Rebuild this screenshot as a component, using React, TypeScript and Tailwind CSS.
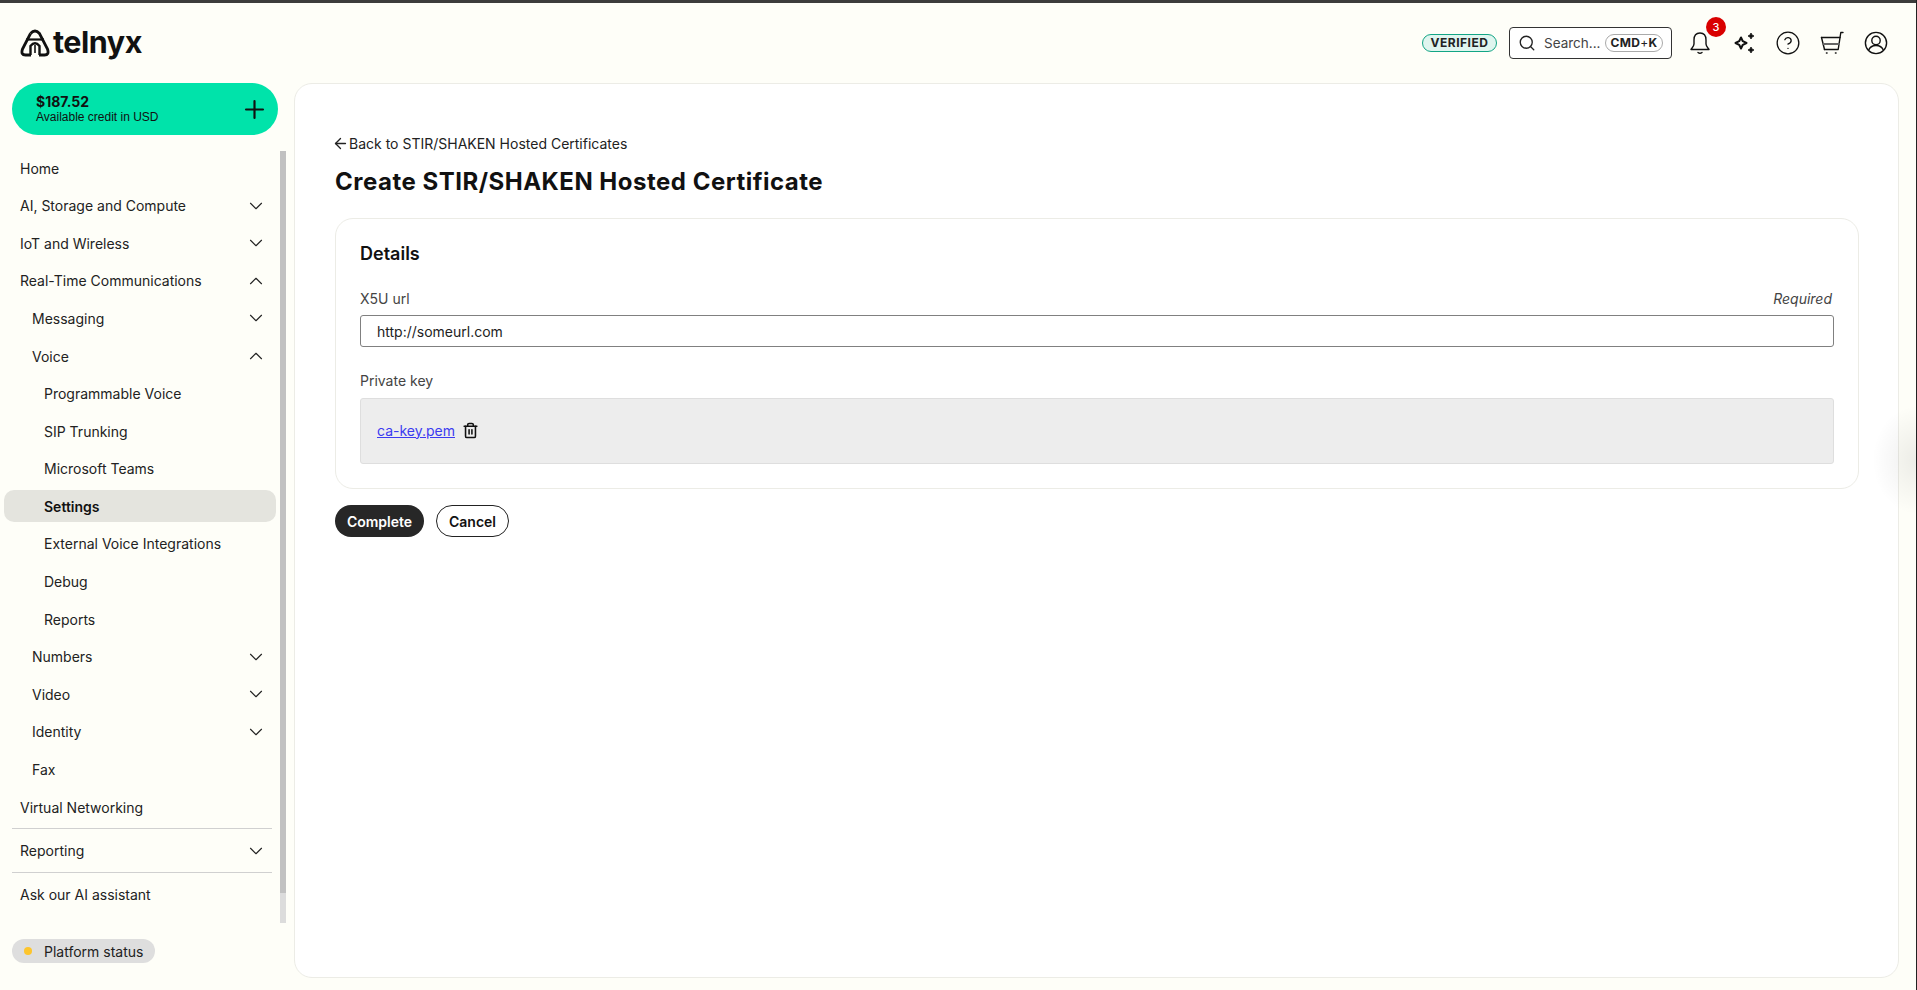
import { ArrowLeft, ChevronDown, ChevronUp, CircleHelp, Plus, Search, Trash2 } from 'lucide-react'

type NavRow = {
  label: string
  indent?: 0 | 1 | 2
  arrow?: 'up' | 'down'
  active?: boolean
}

const navRows: NavRow[] = [
  { label: 'Home' },
  { label: 'AI, Storage and Compute', arrow: 'down' },
  { label: 'IoT and Wireless', arrow: 'down' },
  { label: 'Real-Time Communications', arrow: 'up' },
  { label: 'Messaging', indent: 1, arrow: 'down' },
  { label: 'Voice', indent: 1, arrow: 'up' },
  { label: 'Programmable Voice', indent: 2 },
  { label: 'SIP Trunking', indent: 2 },
  { label: 'Microsoft Teams', indent: 2 },
  { label: 'Settings', indent: 2, active: true },
  { label: 'External Voice Integrations', indent: 2 },
  { label: 'Debug', indent: 2 },
  { label: 'Reports', indent: 2 },
  { label: 'Numbers', indent: 1, arrow: 'down' },
  { label: 'Video', indent: 1, arrow: 'down' },
  { label: 'Identity', indent: 1, arrow: 'down' },
  { label: 'Fax', indent: 1 },
  { label: 'Virtual Networking' },
]

function Row({ label, indent = 0, arrow, active }: NavRow) {
  const pad = indent === 2 ? 'pl-[40px]' : indent === 1 ? 'pl-[28px]' : 'pl-[16px]'
  return (
    <div className="flex h-[37.6px] items-center">
      <div
        className={`flex h-[32px] w-full items-center justify-between pr-[9px] ${pad} ${
          active ? 'rounded-[10px] bg-[#e4e4de] font-semibold text-[#111111]' : 'text-[#222222]'
        }`}
      >
        <span>{label}</span>
        {arrow === 'down' && <ChevronDown size={22} strokeWidth={1.2} />}
        {arrow === 'up' && <ChevronUp size={22} strokeWidth={1.2} />}
      </div>
    </div>
  )
}

function LogoMark() {
  return (
    <svg width="30" height="28" viewBox="0 0 30 28" fill="none" stroke="#111111" strokeWidth="2.8">
      <path d="M10.5 4.5 Q15 -0.5 19.5 4.5 L27.5 20 Q29.5 26 24.5 26 H19" />
      <path d="M10.5 4.5 L2.5 20 Q0.5 26 5.5 26 H11" />
      <path d="M6 10.5 H24" strokeWidth="2.2" />
      <path d="M10.5 26 V17 Q15 11.5 19.5 17 V26" strokeWidth="2.4" />
      <path d="M15 16 V24" strokeWidth="1.6" />
    </svg>
  )
}

function Sparkles() {
  return (
    <svg width="22" height="22" viewBox="0 0 22 22" fill="none" stroke="#111111" strokeWidth="2" strokeLinejoin="round">
      <path d="M7 5.5 L8.8 9.2 L12.5 11 L8.8 12.8 L7 16.5 L5.2 12.8 L1.5 11 L5.2 9.2 Z" />
      <path d="M17 1 L18 3 L20 4 L18 5 L17 7 L16 5 L14 4 L16 3 Z" fill="#111111" strokeWidth="0.8" />
      <path d="M17 15 L18 17 L20 18 L18 19 L17 21 L16 19 L14 18 L16 17 Z" fill="#111111" strokeWidth="0.8" />
    </svg>
  )
}

function Cart() {
  return (
    <svg width="24" height="24" viewBox="0 0 24 24" fill="none" stroke="#111111" strokeWidth="1.4" strokeLinecap="round" strokeLinejoin="round">
      <path d="M23 1.5 H20.8 L18.2 18.5 H4.5" />
      <path d="M1.5 6.5 H20" />
      <path d="M1.5 6.5 L4.5 18.5" />
      <path d="M3.5 13 H19" stroke="#666666" strokeWidth="2" />
      <path d="M6.5 22 H7 M15.5 22 H16" strokeWidth="1.6" />
    </svg>
  )
}

function Person() {
  return (
    <svg width="24" height="24" viewBox="0 0 24 24" fill="none" stroke="#111111" strokeWidth="1.4">
      <circle cx="12" cy="12" r="10.6" />
      <circle cx="12" cy="9.5" r="4.2" />
      <path d="M4.5 19.5 C6 15.5 9 14.5 12 14.5 C15 14.5 18 15.5 19.5 19.5" />
    </svg>
  )
}

export default function App() {
  return (
    <div className="relative flex h-[990px] flex-col overflow-hidden bg-[#fefef8] font-['Inter',sans-serif] text-[14px] text-[#222222]">
      <div className="h-[3px] shrink-0 bg-[#3c3c3c]" />
      <div className="absolute right-0 top-0 h-full w-[1px] bg-[#222222]" />
      <div className="absolute right-0 top-[405px] h-[110px] w-[45px] bg-[radial-gradient(ellipse_at_right,rgba(0,0,0,0.07),transparent_70%)]" />

      <header className="flex h-[80px] shrink-0 items-center justify-between pl-[20px] pr-[27px]">
        <div className="flex items-center gap-[3px]">
          <LogoMark />
          <span className="-mt-[2px] text-[30.5px] font-bold leading-none tracking-[-0.5px] text-[#111111]">telnyx</span>
        </div>

        <div className="flex items-center">
          <span className="flex h-[18px] w-[75px] items-center justify-center rounded-full border border-[#12a585] bg-[#dff5ef] text-[12px] font-bold leading-none tracking-[0.5px] text-[#222222]">
            VERIFIED
          </span>
          <div className="ml-[12px] flex h-[32px] w-[163px] items-center rounded-[4px] border border-[#333333] bg-white pl-[8px] pr-[8px] text-[13.5px] text-[#444444]">
            <Search size={18} strokeWidth={1.8} className="text-[#222222]" />
            <span className="ml-[8px]">Search...</span>
            <span className="ml-auto flex h-[18px] w-[58px] items-center justify-center rounded-full border border-[#aaaaaa] text-[12px] font-bold leading-none tracking-[0.3px] text-[#222222]">
              CMD<span className="font-normal">+</span>K
            </span>
          </div>
          <div className="relative ml-[14px] flex h-[28px] w-[28px] items-center justify-center">
            <svg width="22" height="24" viewBox="0 0 22 24" fill="none" stroke="#111111" strokeWidth="1.4" strokeLinejoin="round">
              <path d="M11 2 C6.5 2 5 5.5 5 9 V13 C5 15 3.5 16.5 2 18.5 H20 C18.5 16.5 17 15 17 13 V9 C17 5.5 15.5 2 11 2 Z" />
              <path d="M9 21.5 Q11 23 13 21.5" strokeLinecap="round" />
            </svg>
            <span className="absolute left-[20px] top-[-12px] flex h-[20px] w-[20px] items-center justify-center rounded-full bg-[#d90000] text-[11px] font-medium text-white">
              3
            </span>
          </div>
          <div className="ml-[17px] flex h-[28px] w-[28px] items-center justify-center">
            <Sparkles />
          </div>
          <div className="ml-[15px] flex h-[28px] w-[28px] items-center justify-center">
            <CircleHelp size={26} strokeWidth={1.2} className="text-[#111111]" />
          </div>
          <div className="ml-[16px] flex h-[28px] w-[28px] items-center justify-center">
            <Cart />
          </div>
          <div className="ml-[16px] flex h-[28px] w-[28px] items-center justify-center">
            <Person />
          </div>
        </div>
      </header>

      <div className="flex min-h-0 flex-1 pb-[12px] pr-[18px]">
        <aside className="flex w-[294px] shrink-0 flex-col">
          <div className="ml-[12px] flex h-[52px] w-[266px] items-center justify-between rounded-full bg-[#00e3aa] pl-[24px] pr-[9px] text-[#111111]">
            <div className="flex flex-col">
              <span className="text-[14px] font-bold leading-[16px]">$187.52</span>
              <span className="font-['Liberation_Sans',sans-serif] text-[12px] leading-[15px]">Available credit in USD</span>
            </div>
            <Plus size={29} strokeWidth={1.8} />
          </div>

          <div className="relative mt-[14px] h-[772px] pr-[18px]">
            <div className="absolute right-[8px] top-[2px] h-[772px] w-[6px] bg-[#dcdcdc]">
              <div className="h-[742px] w-full bg-[#c1c1c1]" />
            </div>
            <nav className="ml-[4px] mt-[0.25px] flex flex-col">
              {navRows.map((row) => (
                <Row key={row.label} {...row} />
              ))}
              <div className="ml-[8px] mr-[4px] mt-[2px] border-t border-[#d0d0d0]" />
              <div className="flex h-[43px] items-center justify-between pl-[16px] pr-[9px] pt-[1px]">
                <span>Reporting</span>
                <ChevronDown size={22} strokeWidth={1.2} />
              </div>
              <div className="ml-[8px] mr-[4px] border-t border-[#d0d0d0]" />
              <div className="flex h-[44px] items-center pl-[16px]">Ask our AI assistant</div>
            </nav>
          </div>

          <div className="ml-[12px] mt-[18px] flex h-[24px] w-[143px] items-center rounded-full bg-[#dedede] pl-[12px]">
            <span className="h-[8px] w-[8px] rounded-full bg-[#fdc52c]" />
            <span className="ml-[12px] text-[#222222]">Platform status</span>
          </div>
        </aside>

        <main className="min-w-0 flex-1 rounded-[18px] border border-[#ecece6] bg-white pl-[40px] pr-[39px] pt-[49px]">
          <div className="flex h-[20px] items-center text-[14px] text-[#222222]">
            <ArrowLeft size={17} strokeWidth={1.9} className="-ml-[3px]" />
            Back to STIR/SHAKEN Hosted Certificates
          </div>
          <h1 className="mt-[11px] h-[36px] text-[24px] font-bold leading-[36px] tracking-[0.5px] text-[#111111]">
            Create STIR/SHAKEN Hosted Certificate
          </h1>
          <section className="mt-[18px] h-[271px] rounded-[18px] border border-[#ecece6] bg-white px-[24px] pt-[23px]">
            <h2 className="h-[24px] text-[18px] font-semibold leading-[24px] text-[#111111]">Details</h2>
            <div className="mt-[22px] flex h-[20px] items-center justify-between pr-[2px] text-[14px] text-[#444444]">
              <label>X5U url</label>
              <em>Required</em>
            </div>
            <input
              readOnly
              value="http://someurl.com"
              className="mt-[7px] block h-[32px] w-full rounded-[3px] border border-[#808080] bg-white pl-[16px] text-[14px] text-[#222222] outline-none"
            />
            <div className="mt-[24px] h-[20px] text-[14px] leading-[20px] text-[#444444]">Private key</div>
            <div className="mt-[7px] flex h-[66px] items-center rounded-[3px] border border-[#dedede] bg-[#ededed] pb-[2px] pl-[16px]">
              <a href="#" className="text-[14px] text-[#3b3bf0] underline">
                ca-key.pem
              </a>
              <Trash2 size={17} strokeWidth={2.2} className="ml-[7px] mt-[1px] text-[#111111]" />
            </div>
          </section>
          <div className="mt-[16px] flex gap-[12px]">
            <button className="h-[32px] w-[89px] rounded-full bg-[#272727] text-[14px] font-semibold text-white">
              Complete
            </button>
            <button className="h-[32px] w-[73px] rounded-full border border-[#222222] bg-white text-[14px] font-semibold text-[#111111]">
              Cancel
            </button>
          </div>
        </main>
      </div>
    </div>
  )
}
